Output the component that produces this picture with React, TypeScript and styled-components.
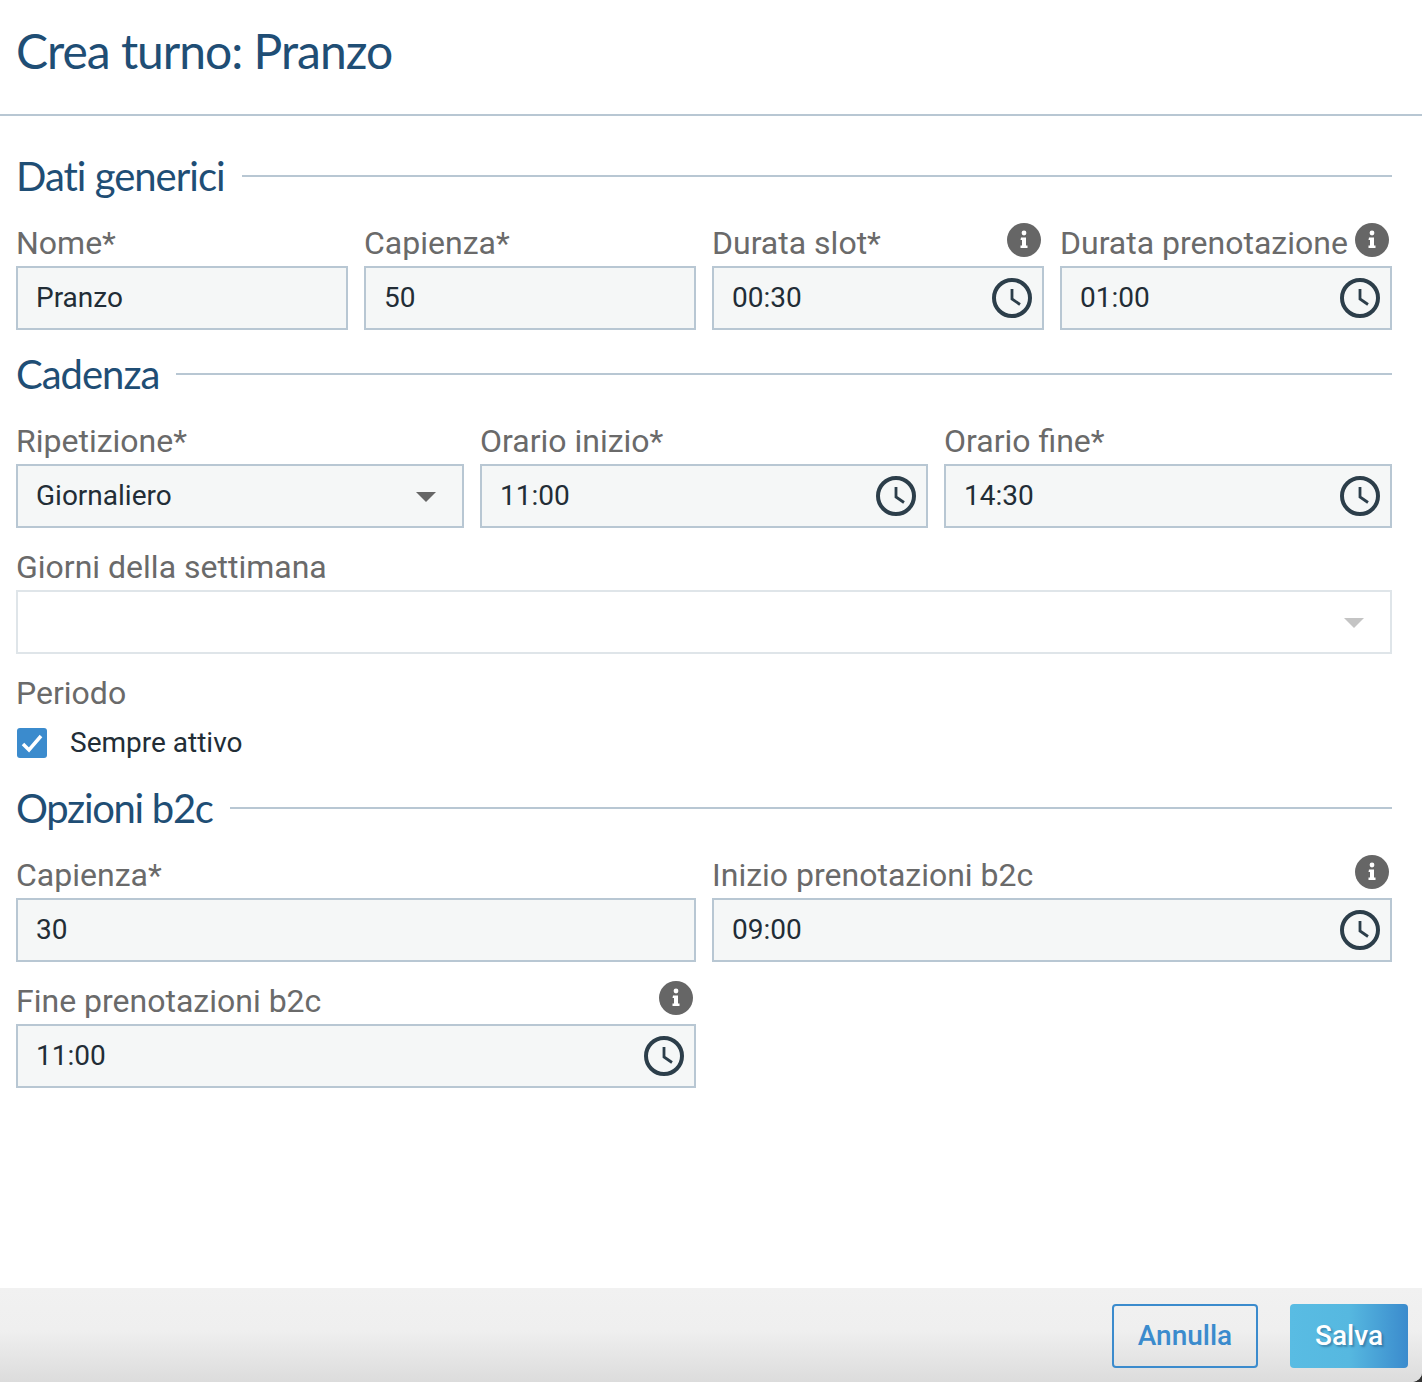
import React from 'react';
import styled, {createGlobalStyle} from 'styled-components';

const GlobalStyle = createGlobalStyle`
    html, body {
        margin: 0;
        padding: 0;
        background: #333;
    }
    body {
        font-family: Roboto, "Liberation Sans", sans-serif;
    }
`;

const Page = styled.div`
    width: 1422px;
    height: 1382px;
    display: flex;
    flex-direction: column;
    overflow: hidden;
    background: #fff;
    border-bottom-right-radius: 10px;
`;

const Header = styled.header`
    height: 114px;
    flex: none;
    padding: 0 16px;
    display: flex;
    align-items: center;
    border-bottom: 2px solid #b8c7d3;
`;

const Title = styled.h1`
    margin: -14px 0 0;
    font-family: Lato, "Noto Sans", sans-serif;
    font-weight: 400;
    font-size: 48px;
    letter-spacing: -1px;
    color: #1f4e75;
`;

const Body = styled.main`
    flex: 1;
    padding: 32px 30px 0 16px;
    display: flex;
    flex-direction: column;
    gap: 16px;
`;

const SectionHeading = styled.div`
    height: 56px;
    display: flex;
    align-items: center;
    gap: 17px;

    &::after {
        content: '';
        flex: 1;
        height: 2px;
        background: #b8c7d3;
    }
`;

const SectionTitle = styled.h2<{$tight?: boolean}>`
    margin: 0;
    font-family: Lato, "Noto Sans", sans-serif;
    font-weight: 400;
    font-size: 40px;
    line-height: 56px;
    letter-spacing: ${p => (p.$tight ? '-1.3px' : '-1px')};
    color: #1f4e75;
`;

const Row = styled.div<{$cols: number}>`
    display: grid;
    grid-template-columns: repeat(${p => p.$cols}, 1fr);
    column-gap: 16px;
`;

const Field = styled.div`
    min-width: 0;
`;

const LabelRow = styled.div`
    height: 46px;
    display: flex;
    align-items: center;
    justify-content: space-between;
    padding-right: 3px;
`;

const Label = styled.label`
    font-size: 32px;
    line-height: 46px;
    color: #6a6a6a;
    white-space: nowrap;
`;

const InfoSvg = styled.svg`
    margin-bottom: 6px;
`;

const Control = styled.div<{$disabled?: boolean}>`
    box-sizing: border-box;
    height: 64px;
    display: flex;
    align-items: center;
    justify-content: space-between;
    padding: 0 10px 0 18px;
    border: 2px solid ${p => (p.$disabled ? '#dfe5e9' : '#b8c7d3')};
    background: ${p => (p.$disabled ? '#fff' : '#f5f7f7')};
`;

const Value = styled.span`
    font-size: 28px;
    color: #222d36;
    padding-bottom: 2px;
`;

const Caret = styled.span<{$disabled?: boolean}>`
    width: 0;
    height: 0;
    margin: 2px 16px 0 0;
    border-left: 10px solid transparent;
    border-right: 10px solid transparent;
    border-top: 10px solid ${p => (p.$disabled ? '#c4c4c4' : '#666')};
`;

const CheckRow = styled.div`
    display: flex;
    align-items: center;
    gap: 23px;
    padding: 10px 0 5px 1px;
`;

const CheckBox = styled.span`
    width: 30px;
    height: 30px;
    flex: none;
    display: flex;
    align-items: center;
    justify-content: center;
    border-radius: 3px;
    background: #3b8bcd;
`;

const CheckText = styled.span`
    font-size: 28px;
    color: #222d36;
`;

const Footer = styled.footer`
    height: 94px;
    flex: none;
    display: flex;
    align-items: center;
    justify-content: flex-end;
    gap: 32px;
    padding: 2px 14px 0 0;
    box-sizing: border-box;
    background: linear-gradient(#f1f1f1 0%, #efefef 45%, #dcdcdc 100%);
`;

const OutlineButton = styled.button`
    width: 146px;
    height: 64px;
    padding: 0 0 2px;
    border: 2px solid #3b8bcd;
    border-radius: 4px;
    background: transparent;
    color: #3b8bcd;
    font-family: inherit;
    font-weight: 500;
    font-size: 28px;
`;

const PrimaryButton = styled.button`
    width: 118px;
    height: 64px;
    padding: 0 0 2px;
    border: 0;
    border-radius: 4px;
    background: linear-gradient(90deg, #59bce3 0%, #56b8e0 50%, #3b8bcd 100%);
    color: #fff;
    font-family: inherit;
    font-weight: 500;
    font-size: 28px;
    text-shadow: 2px 2px 2px rgba(30, 80, 120, 0.45);
`;

const ClockIcon = () => (
    <svg width="40" height="40" viewBox="0 0 40 40" fill="none" stroke="#2c3e4a" strokeWidth="4">
        <circle cx="20" cy="20" r="18" />
        <path d="M20 11v10l8 5.500" strokeWidth="2.800" />
    </svg>
);

const InfoIcon = () => (
    <InfoSvg width="34" height="34" viewBox="0 0 34 34">
        <circle cx="17" cy="17" r="17" fill="#666" />
        <circle cx="17" cy="10" r="2.400" fill="#fff" />
        <path d="M14 14.500h5v8h1.500v2.500h-7v-2.500h1.500v-5.500h-1.500z" fill="#fff" />
    </InfoSvg>
);

type TextFieldProps = {
    label: string;
    value?: string;
    info?: boolean;
    clock?: boolean;
};

function TextField({label, value, info, clock}: TextFieldProps) {
    return (
        <Field>
            <LabelRow>
                <Label>{label}</Label>
                {info && <InfoIcon />}
            </LabelRow>
            <Control>
                <Value>{value}</Value>
                {clock && <ClockIcon />}
            </Control>
        </Field>
    );
}

export default function App() {
    return (
        <Page>
            <GlobalStyle />
            <Header>
                <Title>Crea turno: Pranzo</Title>
            </Header>
            <Body>
                <SectionHeading>
                    <SectionTitle>Dati generici</SectionTitle>
                </SectionHeading>
                <Row $cols={4}>
                    <TextField label="Nome*" value="Pranzo" />
                    <TextField label="Capienza*" value="50" />
                    <TextField label="Durata slot*" value="00:30" info clock />
                    <TextField label="Durata prenotazione" value="01:00" info clock />
                </Row>
                <SectionHeading>
                    <SectionTitle>Cadenza</SectionTitle>
                </SectionHeading>
                <Row $cols={3}>
                    <Field>
                        <LabelRow>
                            <Label>Ripetizione*</Label>
                        </LabelRow>
                        <Control>
                            <Value>Giornaliero</Value>
                            <Caret />
                        </Control>
                    </Field>
                    <TextField label="Orario inizio*" value="11:00" clock />
                    <TextField label="Orario fine*" value="14:30" clock />
                </Row>
                <Field>
                    <LabelRow>
                        <Label>Giorni della settimana</Label>
                    </LabelRow>
                    <Control $disabled>
                        <Value />
                        <Caret $disabled />
                    </Control>
                </Field>
                <Field>
                    <LabelRow>
                        <Label>Periodo</Label>
                    </LabelRow>
                    <CheckRow>
                        <CheckBox>
                            <svg width="24" height="24" viewBox="0 0 24 24" fill="none" stroke="#fff" strokeWidth="3.500">
                                <path d="M3 13l6 6L21 5" />
                            </svg>
                        </CheckBox>
                        <CheckText>Sempre attivo</CheckText>
                    </CheckRow>
                </Field>
                <SectionHeading>
                    <SectionTitle $tight>Opzioni b2c</SectionTitle>
                </SectionHeading>
                <Row $cols={2}>
                    <TextField label="Capienza*" value="30" />
                    <TextField label="Inizio prenotazioni b2c" value="09:00" info clock />
                </Row>
                <Row $cols={2}>
                    <TextField label="Fine prenotazioni b2c" value="11:00" info clock />
                </Row>
            </Body>
            <Footer>
                <OutlineButton>Annulla</OutlineButton>
                <PrimaryButton>Salva</PrimaryButton>
            </Footer>
        </Page>
    );
}
